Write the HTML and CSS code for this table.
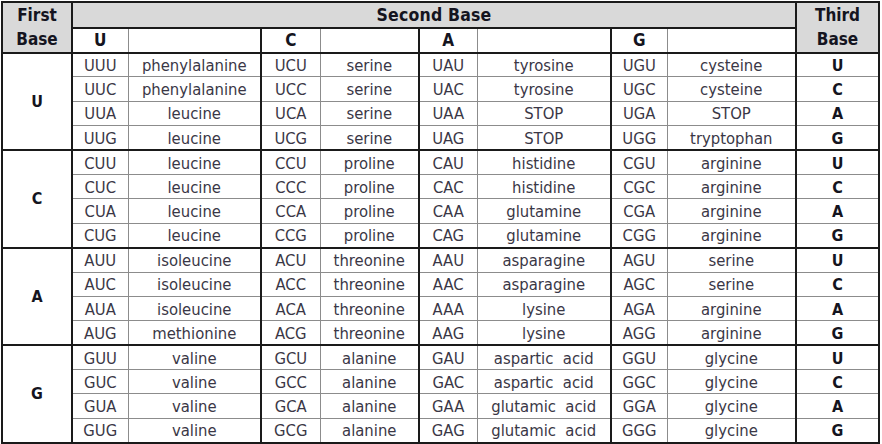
FILE: index.html
```html
<!DOCTYPE html>
<html>
<head>
<meta charset="utf-8">
<link rel="stylesheet" href="styles.css">
</head>
<body>
<table class="codon">
<colgroup>
<col class="w-first"><col class="w-code"><col class="w-u"><col class="w-code2"><col class="w-c"><col class="w-code3"><col class="w-a"><col class="w-code4"><col class="w-g"><col class="w-third">
</colgroup>
<thead>
<tr class="h1">
<th rowspan="2" class="side">First<br>Base</th>
<th colspan="8" class="second">Second Base</th>
<th rowspan="2" class="side third-h">Third<br>Base</th>
</tr>
<tr class="h2">
<th class="code">U</th><th class="aa"></th>
<th class="code">C</th><th class="aa"></th>
<th class="code">A</th><th class="aa"></th>
<th class="code">G</th><th class="aa"></th>
</tr>
</thead>
<tbody>
<tr class="first"><th rowspan="4" class="base">U</th><td class="code">UUU</td><td class="aa">phenylalanine</td><td class="code">UCU</td><td class="aa">serine</td><td class="code">UAU</td><td class="aa">tyrosine</td><td class="code">UGU</td><td class="aa">cysteine</td><th class="third">U</th></tr>
<tr><td class="code">UUC</td><td class="aa">phenylalanine</td><td class="code">UCC</td><td class="aa">serine</td><td class="code">UAC</td><td class="aa">tyrosine</td><td class="code">UGC</td><td class="aa">cysteine</td><th class="third">C</th></tr>
<tr><td class="code">UUA</td><td class="aa">leucine</td><td class="code">UCA</td><td class="aa">serine</td><td class="code">UAA</td><td class="aa">STOP</td><td class="code">UGA</td><td class="aa">STOP</td><th class="third">A</th></tr>
<tr class="last"><td class="code">UUG</td><td class="aa">leucine</td><td class="code">UCG</td><td class="aa">serine</td><td class="code">UAG</td><td class="aa">STOP</td><td class="code">UGG</td><td class="aa">tryptophan</td><th class="third">G</th></tr>
</tbody>
<tbody>
<tr class="first"><th rowspan="4" class="base">C</th><td class="code">CUU</td><td class="aa">leucine</td><td class="code">CCU</td><td class="aa">proline</td><td class="code">CAU</td><td class="aa">histidine</td><td class="code">CGU</td><td class="aa">arginine</td><th class="third">U</th></tr>
<tr><td class="code">CUC</td><td class="aa">leucine</td><td class="code">CCC</td><td class="aa">proline</td><td class="code">CAC</td><td class="aa">histidine</td><td class="code">CGC</td><td class="aa">arginine</td><th class="third">C</th></tr>
<tr><td class="code">CUA</td><td class="aa">leucine</td><td class="code">CCA</td><td class="aa">proline</td><td class="code">CAA</td><td class="aa">glutamine</td><td class="code">CGA</td><td class="aa">arginine</td><th class="third">A</th></tr>
<tr class="last"><td class="code">CUG</td><td class="aa">leucine</td><td class="code">CCG</td><td class="aa">proline</td><td class="code">CAG</td><td class="aa">glutamine</td><td class="code">CGG</td><td class="aa">arginine</td><th class="third">G</th></tr>
</tbody>
<tbody>
<tr class="first"><th rowspan="4" class="base">A</th><td class="code">AUU</td><td class="aa">isoleucine</td><td class="code">ACU</td><td class="aa">threonine</td><td class="code">AAU</td><td class="aa">asparagine</td><td class="code">AGU</td><td class="aa">serine</td><th class="third">U</th></tr>
<tr><td class="code">AUC</td><td class="aa">isoleucine</td><td class="code">ACC</td><td class="aa">threonine</td><td class="code">AAC</td><td class="aa">asparagine</td><td class="code">AGC</td><td class="aa">serine</td><th class="third">C</th></tr>
<tr><td class="code">AUA</td><td class="aa">isoleucine</td><td class="code">ACA</td><td class="aa">threonine</td><td class="code">AAA</td><td class="aa">lysine</td><td class="code">AGA</td><td class="aa">arginine</td><th class="third">A</th></tr>
<tr class="last"><td class="code">AUG</td><td class="aa">methionine</td><td class="code">ACG</td><td class="aa">threonine</td><td class="code">AAG</td><td class="aa">lysine</td><td class="code">AGG</td><td class="aa">arginine</td><th class="third">G</th></tr>
</tbody>
<tbody>
<tr class="first"><th rowspan="4" class="base">G</th><td class="code">GUU</td><td class="aa">valine</td><td class="code">GCU</td><td class="aa">alanine</td><td class="code">GAU</td><td class="aa">aspartic&nbsp; acid</td><td class="code">GGU</td><td class="aa">glycine</td><th class="third">U</th></tr>
<tr><td class="code">GUC</td><td class="aa">valine</td><td class="code">GCC</td><td class="aa">alanine</td><td class="code">GAC</td><td class="aa">aspartic&nbsp; acid</td><td class="code">GGC</td><td class="aa">glycine</td><th class="third">C</th></tr>
<tr><td class="code">GUA</td><td class="aa">valine</td><td class="code">GCA</td><td class="aa">alanine</td><td class="code">GAA</td><td class="aa">glutamic&nbsp; acid</td><td class="code">GGA</td><td class="aa">glycine</td><th class="third">A</th></tr>
<tr class="last"><td class="code">GUG</td><td class="aa">valine</td><td class="code">GCG</td><td class="aa">alanine</td><td class="code">GAG</td><td class="aa">glutamic&nbsp; acid</td><td class="code">GGG</td><td class="aa">glycine</td><th class="third">G</th></tr>
</tbody>
</table>
</body>
</html>
```
FILE: styles.css
```css
html, body {
  margin: 0;
  padding: 0;
  background: #ffffff;
}
body {
  padding: 1px 0 0 1px;
  font-family: "DejaVu Sans Condensed", "DejaVu Sans", sans-serif;
}
.codon {
  border-collapse: collapse;
  table-layout: fixed;
  width: 879px;
  border: 2px solid #1a1a1a;
  color: #3a3746;
  font-size: 16.5px;
}
.w-first { width: 70px; }
.w-code { width: 56px; }
.w-u { width: 133px; }
.w-code2 { width: 59px; }
.w-c { width: 99px; }
.w-code3 { width: 58px; }
.w-a { width: 134px; }
.w-code4 { width: 56px; }
.w-g { width: 129px; }
.w-third { width: 83px; }

.codon th, .codon td {
  padding: 0;
  text-align: center;
  vertical-align: middle;
  white-space: nowrap;
  overflow: hidden;
}
.codon td, .codon th.third {
  padding-top: 2px;
  line-height: 20px;
}
.codon th {
  font-weight: bold;
  color: #141420;
  font-size: 17px;
}
.h1 th {
  height: 23.5px;
  background: #d9d9d9;
  border-bottom: 2px solid #1a1a1a;
}
.h1 .side {
  border-right: 2px solid #1a1a1a;
  border-left: 2px solid #1a1a1a;
  line-height: 24px;
}
.h1 .second {
  font-size: 17.5px;
  letter-spacing: 0.2px;
}
.h2 th {
  height: 23px;
  background: #ffffff;
  border-bottom: 2px solid #1a1a1a;
}
.codon .code {
  border-left: 2px solid #1a1a1a;
}
.codon .aa {
  border-left: 1px solid #8c8c8c;
}
.codon tbody tr {
  height: 24.4px;
}
.codon tbody td, .codon tbody th.third {
  border-top: 1px solid #8c8c8c;
}
.codon tbody tr.first td, .codon tbody tr.first th {
  border-top: 2px solid #1a1a1a;
}
.codon .base {
  border-right: 2px solid #1a1a1a;
  background: #ffffff;
  font-size: 16px;
}
.codon .third {
  border-left: 2px solid #1a1a1a;
  font-size: 16px;
}
```
